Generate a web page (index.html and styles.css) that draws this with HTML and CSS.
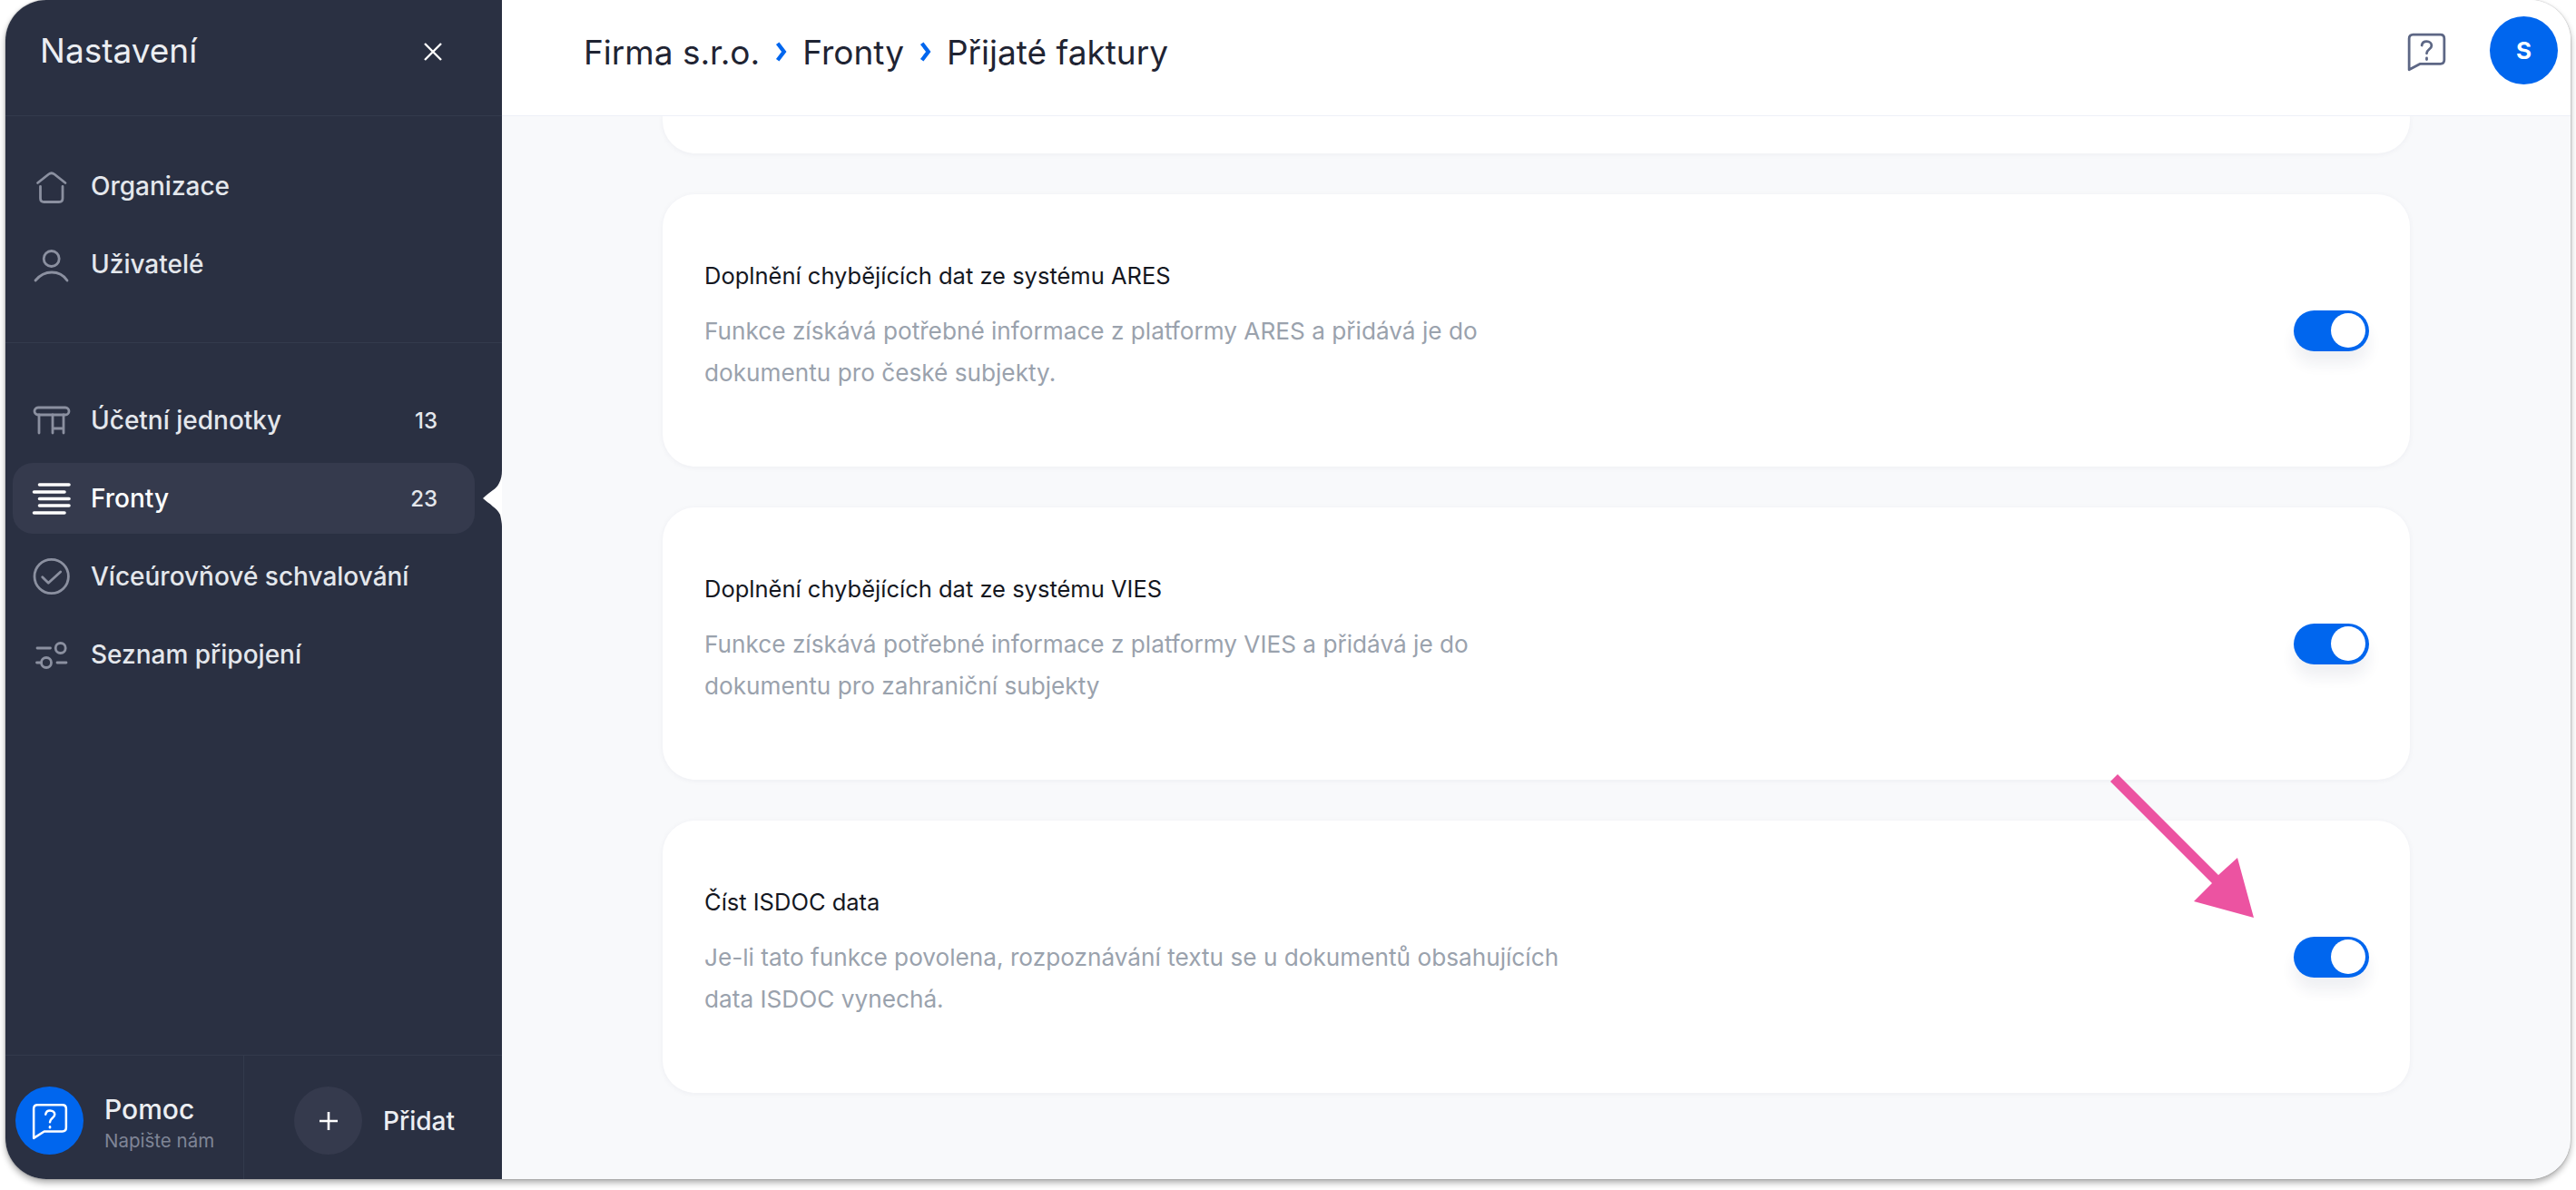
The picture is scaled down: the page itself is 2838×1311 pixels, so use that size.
FILE: index.html
```html
<!DOCTYPE html>
<html lang="cs">
<head>
  <meta charset="utf-8" />
  <title>Nastavení</title>
  <link rel="stylesheet" href="styles.css">
</head>
<body>
  <div class="window">
    <!-- Sidebar -->
    <aside class="sidebar">
      <div class="side-head">
        <span class="side-title">Nastavení</span>
        <svg class="side-close" viewBox="0 0 20 20"><path d="M1 1l18 18M19 1L1 19"/></svg>
      </div>

      <nav class="side-group side-group-top">
        <a class="item">
          <svg class="item-ico" viewBox="0 0 38 38"><path d="M3.500 15.500L15.500 6c2-1.500 4.500-1.500 6.500 0l12 9.500M6.500 19.500v13c0 2.500 1.500 4 4 4H27c2.500 0 4-1.500 4-4v-13"/></svg>
          <span class="item-label">Organizace</span>
        </a>
        <a class="item">
          <svg class="item-ico" viewBox="0 0 38 38"><circle cx="18.700" cy="13" r="8.500"/><path d="M1 37c5-6 11-9 18-9s13 3 17 9"/></svg>
          <span class="item-label">Uživatelé</span>
        </a>
      </nav>

      <nav class="side-group">
        <a class="item">
          <svg class="item-ico" viewBox="0 0 38 38"><rect x="0" y="5" width="38" height="8" rx="4"/><path d="M5 13v20M20 13v20M32 13v20M20 28h12"/></svg>
          <span class="item-label">Účetní jednotky</span>
          <span class="item-count">13</span>
        </a>
        <a class="item active">
          <svg class="item-ico" viewBox="0 0 38 38"><path d="M5.500 4H38M-.5 12H33M5.500 19.500H38M5.500 27H38M-.5 35H33"/></svg>
          <span class="item-label">Fronty</span>
          <span class="item-count">23</span>
        </a>
        <a class="item">
          <svg class="item-ico" viewBox="0 0 38 38"><circle cx="18.700" cy="19" r="18.700"/><path d="M8.700 19.700l6.600 6.600L28.700 14"/></svg>
          <span class="item-label">Víceúrovňové schvalování</span>
        </a>
        <a class="item">
          <svg class="item-ico" viewBox="0 0 38 38"><circle cx="28.700" cy="12" r="5.500"/><circle cx="13" cy="28" r="5.500"/><path d="M3 12h14.500M25 28h10M2.500 28h5"/></svg>
          <span class="item-label">Seznam připojení</span>
        </a>
      </nav>

      <div class="side-foot">
        <div class="foot-cell foot-help">
          <span class="round round-blue">
            <svg class="bubble" viewBox="0 0 40 40"><path d="M7 3h26c2.500 0 4 1.500 4 4v20c0 2.500-1.500 4-4 4H14L3 38V7c0-2.500 1.500-4 4-4z"/><path d="M15.500 13c.5-3 2.500-4 4.500-4 3 0 5 1.800 5 4.200 0 3.800-5 3.800-5 8"/><path d="M20 26v1"/></svg>
          </span>
          <div class="help-text">
            <div class="help-name">Pomoc</div>
            <div class="help-sub">Napište nám</div>
          </div>
        </div>
        <div class="foot-cell foot-add">
          <span class="round round-dark">
            <svg class="plus" viewBox="0 0 24 24"><path d="M12 2v20M2 12h20"/></svg>
          </span>
          <span class="add-label">Přidat</span>
        </div>
      </div>

      <svg class="notch" viewBox="0 0 21 62"><path d="M21 0c0 6-1 10-3 14-2 4-4 6-7 8-4 3-8 6-11 9 3 3 7 5 11 9 3 2 6 5 8 9 1 5 2 9 2 13z"/></svg>
    </aside>

    <!-- Main -->
    <main class="main">
      <header class="topbar">
        <div class="crumbs">
          <span>Firma s.r.o.</span>
          <svg class="crumb-sep" viewBox="0 0 12 22"><path d="M2.500 2.500L9 11l-6.500 8.500"/></svg>
          <span>Fronty</span>
          <svg class="crumb-sep" viewBox="0 0 12 22"><path d="M2.500 2.500L9 11l-6.500 8.500"/></svg>
          <span>Přijaté faktury</span>
        </div>
        <svg class="top-help" viewBox="0 0 40 40"><path d="M6 2h28c2.500 0 4 1.500 4 4v22c0 2.500-1.500 4-4 4H13L2 38V6c0-2.500 1.500-4 4-4z"/><path d="M15 13c.5-3 2.500-4 5-4 3 0 5 1.800 5 4.200 0 3.800-5 3.800-5 8"/><path d="M20 26v1.500"/></svg>
        <span class="avatar">S</span>
      </header>

      <div class="content">
        <section class="card card-cut"></section>

        <section class="card">
          <div class="card-text">
            <h3 class="card-title">Doplnění chybějících dat ze systému ARES</h3>
            <p class="card-desc">Funkce získává potřebné informace z platformy ARES a přidává je do dokumentu pro české subjekty.</p>
          </div>
          <span class="toggle"></span>
        </section>

        <section class="card">
          <div class="card-text">
            <h3 class="card-title">Doplnění chybějících dat ze systému VIES</h3>
            <p class="card-desc">Funkce získává potřebné informace z platformy VIES a přidává je do dokumentu pro zahraniční subjekty</p>
          </div>
          <span class="toggle"></span>
        </section>

        <section class="card">
          <div class="card-text">
            <h3 class="card-title">Číst ISDOC data</h3>
            <p class="card-desc">Je-li tato funkce povolena, rozpoznávání textu se u dokumentů obsahujících data ISDOC vynechá.</p>
          </div>
          <span class="toggle"></span>
        </section>
      </div>
    </main>

    <!-- Annotation arrow -->
    <svg class="arrow" viewBox="0 0 160 160"><polygon points="8,0 119,111 140,92 158,158 92,140 112,120 0,8"/></svg>
  </div>
</body>
</html>
```

FILE: styles.css
```css
html,body{margin:0;height:100%;background:#fff;font-family:Inter,"Noto Sans",Arial,sans-serif}
body{padding:0 6px 12px;box-sizing:border-box}
.window{position:relative;display:flex;height:100%;border-radius:45px;overflow:hidden;box-shadow:0 4px 7px rgba(0,0,0,.32),0 0 2px rgba(0,0,0,.3)}

/* sidebar */
.sidebar{position:relative;flex:none;width:547px;display:flex;flex-direction:column;background:#2a3042;color:#e8eaef}
.side-head{flex:none;height:127px;display:flex;align-items:center;justify-content:space-between;padding:0 66px 0 38px;border-bottom:1px solid #333a4c}
.side-title{font-size:37px;line-height:44px;margin-bottom:16px;color:#eceef2}
.side-close{width:20px;height:20px;margin-bottom:13px;fill:none;stroke:#fff;stroke-width:2.400}
.side-group{display:flex;flex-direction:column;gap:8px}
.side-group-top{flex:none;height:250px;padding-top:38px;box-sizing:border-box;border-bottom:1px solid #333a4c}
.side-group:not(.side-group-top){padding-top:46px;flex:1}
.item{display:flex;align-items:center;height:78px;margin:0 30px 0 8px;padding:0 41px 0 24px;border-radius:22px;font-size:28px;font-weight:500;color:#e4e7ec}
.item.active{background:#353a4d;color:#fff}
.item-ico{flex:none;width:38px;height:38px;margin-right:24px;overflow:visible;fill:none;stroke:#8b90a0;stroke-width:2.800;stroke-linecap:round;stroke-linejoin:round}
.item.active .item-ico{stroke:#fff;stroke-width:3.600}
.item-label{flex:1;white-space:nowrap}
.item-count{font-size:24px;color:#e4e7ec}
.side-foot{flex:none;height:136px;display:flex;border-top:1px solid #333a4c}
.foot-cell{display:flex;align-items:center;padding-top:7px;box-sizing:border-box}
.foot-help{width:263px;padding-left:11px;border-right:1px solid #333a4c}
.foot-add{flex:1;padding-left:55px}
.round{flex:none;width:75px;height:75px;border-radius:50%;display:flex;align-items:center;justify-content:center}
.round-blue{background:#0066ee}
.round-dark{background:#353a4d}
.bubble{width:42px;height:42px;fill:none;stroke:#fff;stroke-width:2.400;stroke-linejoin:round;stroke-linecap:round}
.plus{width:24px;height:24px;fill:none;stroke:#fff;stroke-width:2.600}
.help-text{margin:7px 0 0 23px}
.help-name{font-size:30px;line-height:36px;font-weight:500;color:#eceef2}
.help-sub{font-size:20.500px;line-height:30px;margin-top:2px;color:#7f8596}
.add-label{margin-left:23px;font-size:28px;font-weight:500;color:#eceef2}
.notch{position:absolute;left:526px;top:518px;width:21px;height:62px;fill:#fff}

/* main */
.main{flex:1;min-width:0;display:flex;flex-direction:column;background:#f8f9fb}
.topbar{flex:none;height:127px;display:flex;align-items:center;padding:0 14px 0 90px;background:#fff;border-bottom:1px solid #edf0f7}
.crumbs{flex:1;display:flex;align-items:center;gap:17px;font-size:37px;color:#1f2433;margin-bottom:13px}
.crumb-sep{width:13px;height:24px;fill:none;stroke:#0066ee;stroke-width:4}
.top-help{width:43px;height:43px;margin-right:48px;margin-bottom:13px;fill:none;stroke:#5d6785;stroke-width:2.600;stroke-linejoin:round;stroke-linecap:round}
.avatar{width:75px;height:75px;border-radius:50%;background:#0066ee;color:#fff;font-size:26px;font-weight:700;display:flex;align-items:center;justify-content:center;margin-bottom:17px}

.content{flex:1;display:flex;flex-direction:column;gap:45px;padding:0 177px;overflow:hidden}
.card{flex:none;height:300px;box-sizing:border-box;display:flex;align-items:center;justify-content:space-between;padding:0 45px 0 46px;background:#fff;border-radius:36px;box-shadow:0 1px 6px rgba(30,40,80,.05)}
.card-cut{height:41px;border-radius:0 0 36px 36px}
.card-text{padding-bottom:10px}
.card-title{margin:0 0 18px;font-size:25.500px;line-height:40px;font-weight:400;color:#14171f}
.card-desc{margin:0;width:960px;font-size:26.200px;line-height:46px;color:#9aa2ad}
.toggle{position:relative;flex:none;width:83px;height:45px;border-radius:23px;background:#0066ee;box-shadow:0 14px 16px rgba(30,40,80,.07)}
.toggle::after{content:"";position:absolute;right:4px;top:3.500px;width:38px;height:38px;border-radius:50%;background:#fff}

.arrow{position:absolute;left:2319px;top:853px;width:160px;height:160px;fill:#ec53a1}
```
